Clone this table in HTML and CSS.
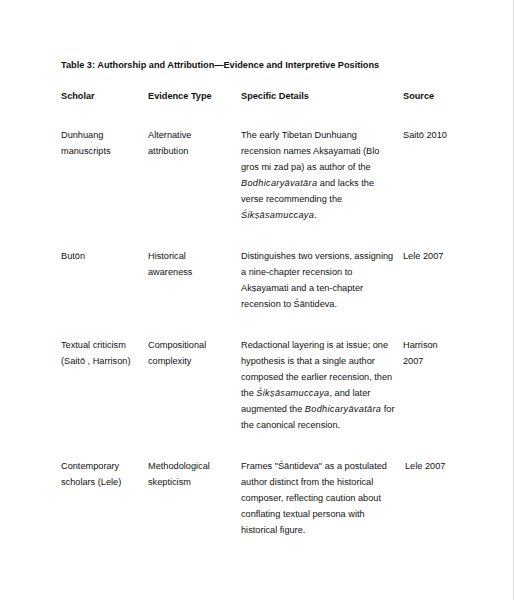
FILE: index.html
```html
<!DOCTYPE html>
<html>
<head>
<meta charset="utf-8">
<link rel="stylesheet" href="styles.css">
</head>
<body>
<div class="page">
  <h1 class="title">Table 3: Authorship and Attribution—Evidence and Interpretive Positions</h1>
  <div class="table">
    <div class="row head">
      <div class="c1">Scholar</div>
      <div class="c2">Evidence Type</div>
      <div class="c3">Specific Details</div>
      <div class="c4">Source</div>
    </div>
    <div class="row">
      <div class="c1">Dunhuang manuscripts</div>
      <div class="c2">Alternative attribution</div>
      <div class="c3">The early Tibetan Dunhuang recension names Akṣayamati (Blo gros mi zad pa) as author of the <i>Bodhicaryāvatāra</i> and lacks the verse recommending the <i>Śikṣāsamuccaya</i>.</div>
      <div class="c4">Saitō 2010</div>
    </div>
    <div class="row">
      <div class="c1">Butōn</div>
      <div class="c2">Historical awareness</div>
      <div class="c3">Distinguishes two versions, assigning a nine-chapter recension to Akṣayamati and a ten-chapter recension to Śāntideva.</div>
      <div class="c4">Lele 2007</div>
    </div>
    <div class="row">
      <div class="c1">Textual criticism (Saitō , Harrison)</div>
      <div class="c2">Compositional complexity</div>
      <div class="c3">Redactional layering is at issue; one hypothesis is that a single author composed the earlier recension, then the <i>Śikṣāsamuccaya</i>, and later augmented the <i>Bodhicaryāvatāra</i> for the canonical recension.</div>
      <div class="c4">Harrison 2007</div>
    </div>
    <div class="row">
      <div class="c1">Contemporary scholars (Lele)</div>
      <div class="c2">Methodological skepticism</div>
      <div class="c3">Frames "Śāntideva" as a postulated author distinct from the historical composer, reflecting caution about conflating textual persona with historical figure.</div>
      <div class="c4 src-indent">Lele 2007</div>
    </div>
  </div>
</div>
</body>
</html>
```

FILE: styles.css
```css
html, body {
  margin: 0;
  padding: 0;
  background: #ffffff;
}
.page {
  box-sizing: border-box;
  width: 514px;
  min-height: 600px;
  border-right: 1px solid #dcdcdc;
  padding: 57px 0 0 61px;
  font-family: "Liberation Sans", Arial, sans-serif;
  font-size: 9.2px;
  line-height: 16px;
  color: #111;
}
.title {
  margin: 0 0 15px 0;
  font-size: 9.2px;
  line-height: 16px;
  font-weight: bold;
}
.row {
  display: grid;
  grid-template-columns: 87px 93px 162px 50px;
  padding: 12px 0 13px 0;
}
.row.head {
  padding: 0 0 11px 0;
  font-weight: bold;
}
.c1 {
  padding-right: 9px;
}
.c2 {
  padding-right: 16px;
}
.c3 {
  padding-right: 7px;
}
.c3 i {
  letter-spacing: 0.3px;
}
.src-indent {
  padding-left: 2px;
}
```
